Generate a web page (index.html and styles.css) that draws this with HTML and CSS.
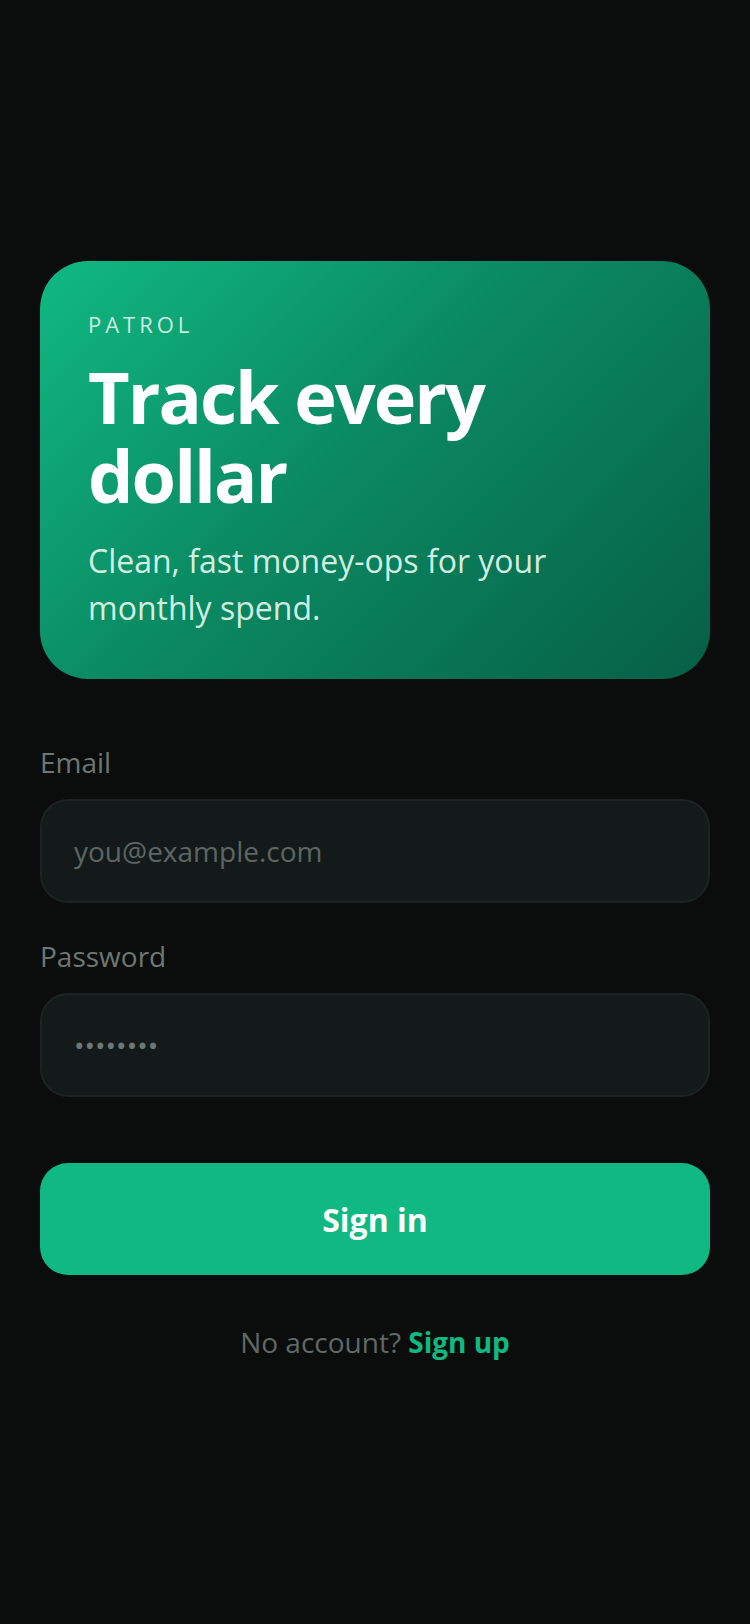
FILE: index.html
```html
<!DOCTYPE html>
<html lang="en">
<head>
  <meta charset="UTF-8" />
  <meta name="viewport" content="width=device-width, initial-scale=1.0"/>
  <title>Patrol – Sign in</title>

  <link rel="stylesheet" href="styles.css">
</head>
<body>
  <main class="login">
    <section class="hero">
      <div class="brand">PATROL</div>
      <h1>Track every dollar</h1>
      <p class="tagline">Clean, fast money-ops for your monthly spend.</p>
    </section>

    <form class="login-form" onsubmit="return false">
      <label class="field-label" for="email">Email</label>
      <input class="field" id="email" type="email" placeholder="you@example.com">

      <label class="field-label" for="password">Password</label>
      <input class="field" id="password" type="password" value="password">

      <button class="primary-btn" type="submit">Sign in</button>
    </form>

    <div class="signup-line">
      No account? <a href="#" class="signup-link">Sign up</a>
    </div>
  </main>
</body>
</html>
```

FILE: styles.css
```css
body {
  margin: 0;
  padding: 0;
  font-family: 'Open Sans', 'Noto Sans', sans-serif;
  background: #0a0d0c;
  color: #fff;
  min-height: 100vh;
  display: flex;
  flex-direction: column;
  justify-content: center;
}

.login {
  padding: 0 40px;
  display: flex;
  flex-direction: column;
}

.hero {
  border-radius: 48px;
  padding: 48px;
  background: linear-gradient(135deg, #10b981 0%, #0b8a62 45%, #065f46 100%);
}

.brand {
  font-size: 22px;
  line-height: 31px;
  letter-spacing: 0.18em;
  color: rgba(255, 255, 255, 0.8);
}

.hero h1 {
  margin: 17px 0 0;
  font-size: 72px;
  line-height: 1.1;
  font-weight: 700;
  letter-spacing: -2px;
}

.tagline {
  margin: 22px 0 0;
  font-size: 32px;
  line-height: 47px;
  color: rgba(236, 253, 245, 0.9);
}

.login-form {
  display: flex;
  flex-direction: column;
  margin-top: 62px;
}

.field-label {
  font-size: 28px;
  line-height: 42px;
  color: #6d7774;
  margin-bottom: 16px;
}

.field {
  box-sizing: border-box;
  height: 104px;
  padding: 0 32px;
  border: 2px solid #1c2321;
  border-radius: 28px;
  background: #141a19;
  color: #6d7774;
  font-family: inherit;
  font-size: 28px;
  outline: none;
  margin-bottom: 32px;
}

.field::placeholder {
  color: #5c6663;
}

.primary-btn {
  margin-top: 34px;
  height: 112px;
  border: none;
  border-radius: 28px;
  background: #10b981;
  color: #fff;
  font-family: inherit;
  font-size: 32px;
  font-weight: 700;
  cursor: pointer;
}

.signup-line {
  margin-top: 46px;
  text-align: center;
  font-size: 28px;
  line-height: 42px;
  color: #5f6966;
}

.signup-link {
  color: #10b981;
  font-weight: 700;
  text-decoration: none;
}
```
